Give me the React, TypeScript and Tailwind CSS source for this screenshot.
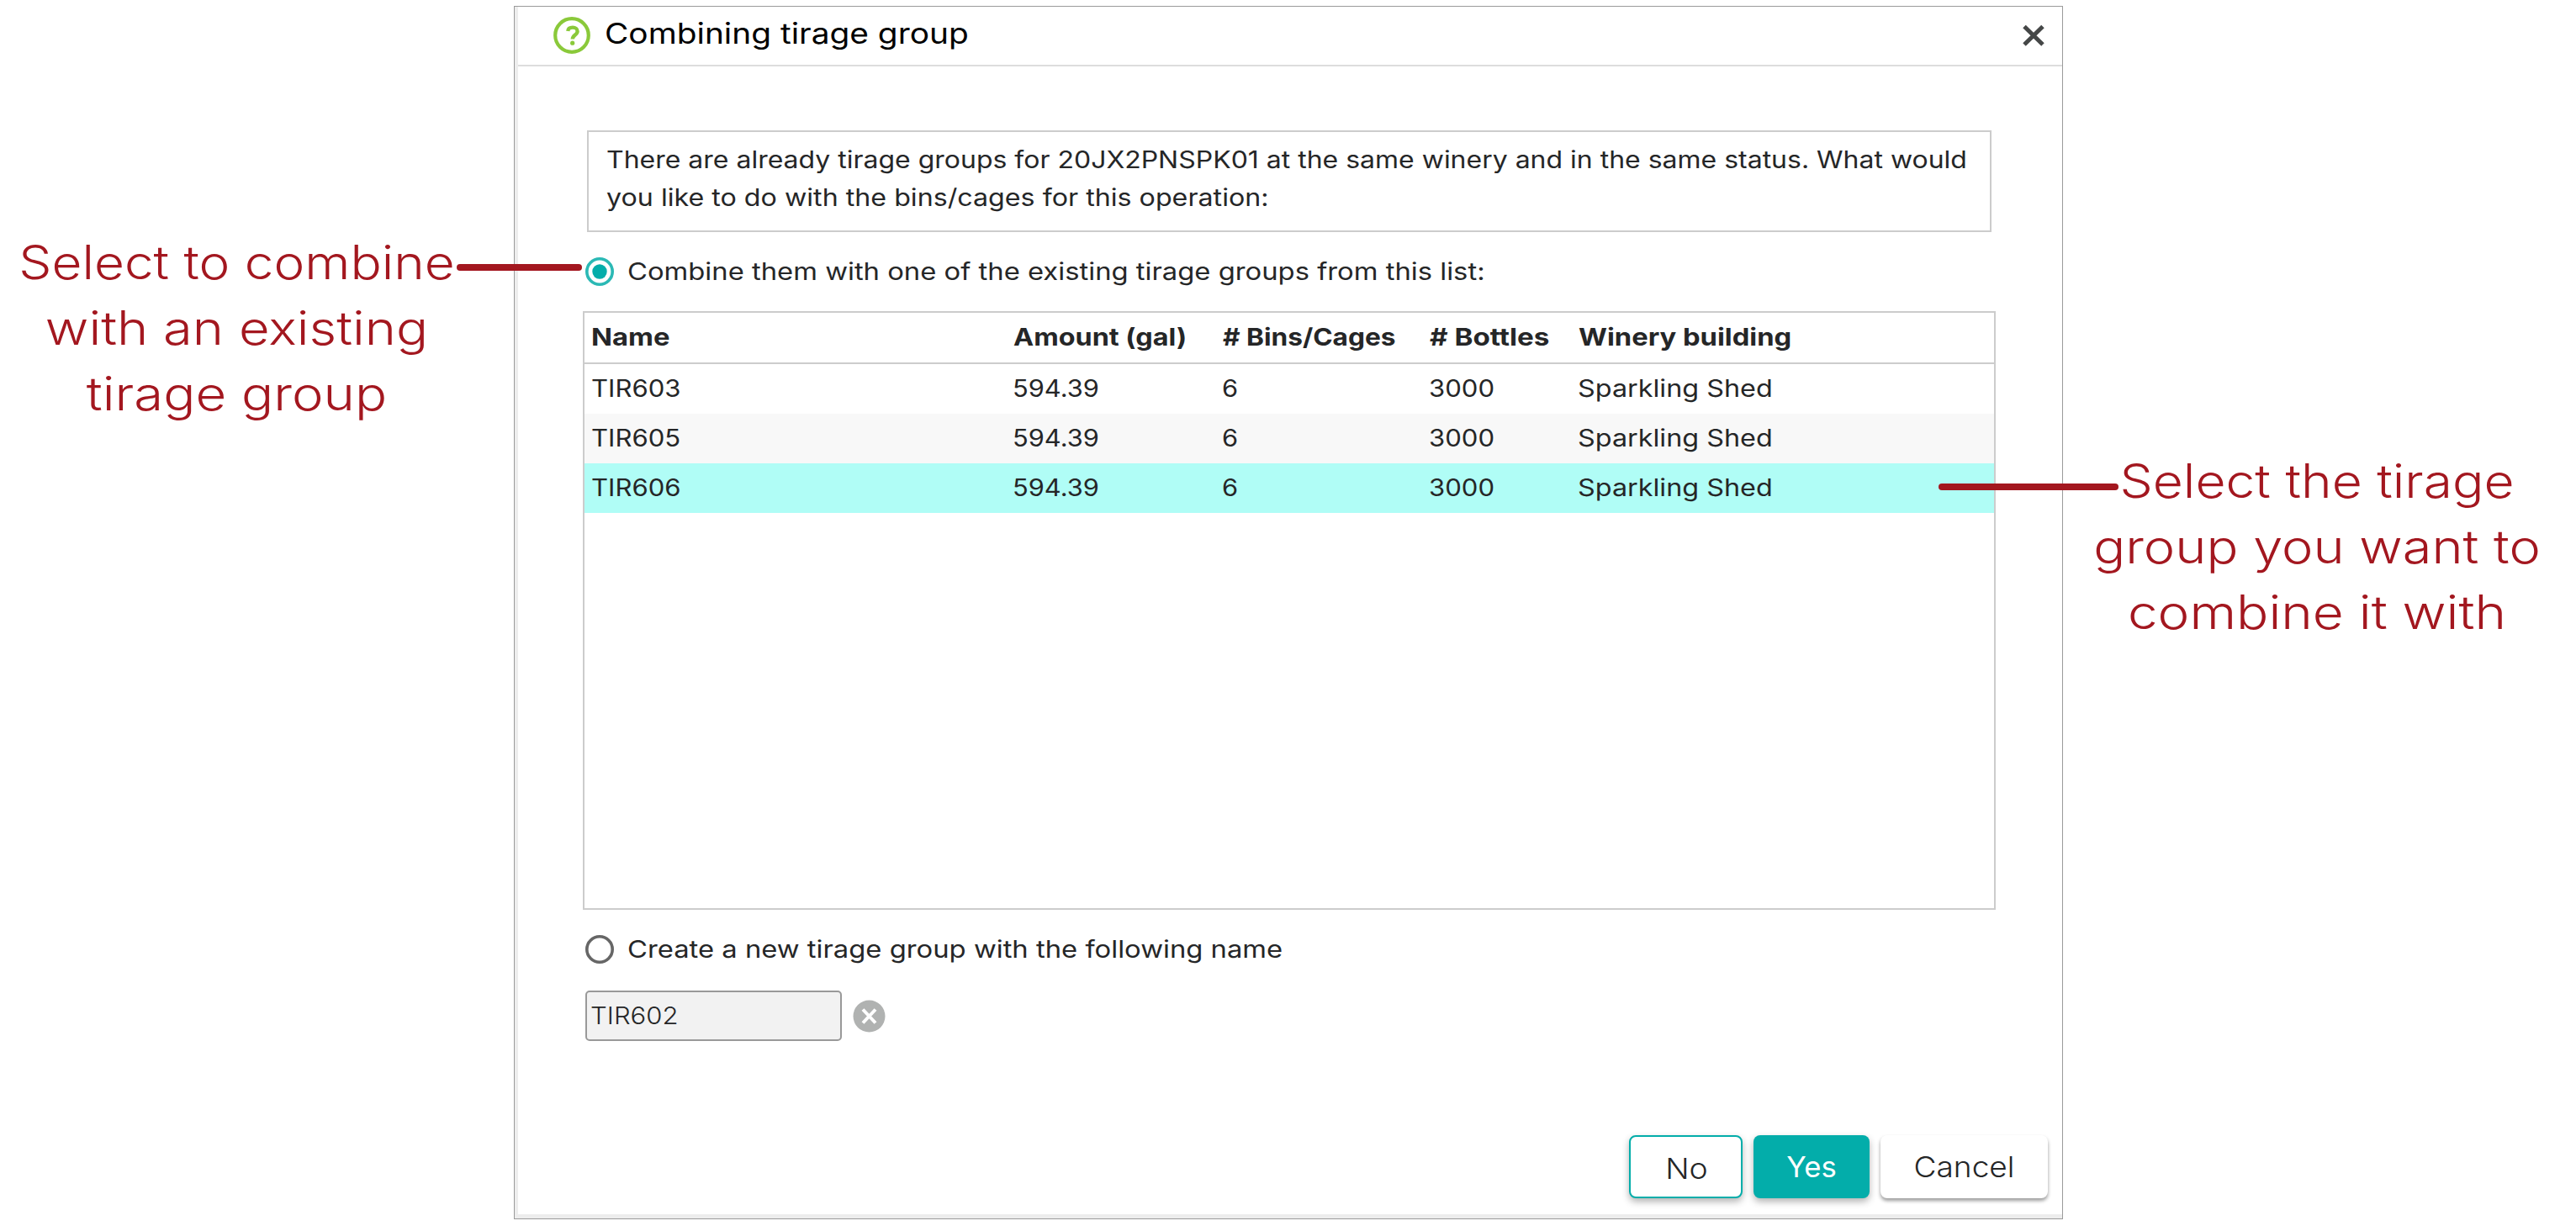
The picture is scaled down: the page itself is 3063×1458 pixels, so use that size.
import { useState } from "react";
import clsx from "clsx";

interface TirageGroup {
  name: string;
  amount: string;
  bins: number;
  bottles: number;
  building: string;
}

const groups: TirageGroup[] = [
  { name: "TIR603", amount: "594.39", bins: 6, bottles: 3000, building: "Sparkling Shed" },
  { name: "TIR605", amount: "594.39", bins: 6, bottles: 3000, building: "Sparkling Shed" },
  { name: "TIR606", amount: "594.39", bins: 6, bottles: 3000, building: "Sparkling Shed" },
];

const columns = [
  { label: "Name", className: "ml-2 scale-x-[1.15]" },
  { label: "Amount (gal)", className: "scale-x-[1.135]" },
  { label: "# Bins/Cages", className: "scale-x-[1.11]" },
  { label: "# Bottles", className: "scale-x-[1.165]" },
  { label: "Winery building", className: "scale-x-[1.148]" },
];

const rowGrid = "grid grid-cols-[510px_249px_246px_177px_1fr] items-center whitespace-nowrap";
const noteText = "text-center text-[55.5px] font-light leading-[78px] text-[#a3171f] whitespace-nowrap";

export default function App() {
  const [mode, setMode] = useState<"combine" | "create">("combine");
  const [selected, setSelected] = useState("TIR606");

  return (
    <div className="flex h-[1458px] w-[3063px] items-start overflow-hidden bg-white font-['Inter',sans-serif] text-[28.5px] text-[#252627]">
      {/* Left note */}
      <div className="relative w-[611px] shrink-0 pt-[273px]">
        <p className={clsx(noteText, "w-[563px]")}>
          <span className="block scale-x-[1.118]">Select to combine</span>
          <span className="block scale-x-[1.14]">with an existing</span>
          <span className="block scale-x-[1.143]">tirage group</span>
        </p>
        <span className="absolute left-[543px] top-[314px] z-10 h-2 w-[149px] rounded-full bg-[#a3171f]" />
      </div>

      {/* Dialog */}
      <div className="mt-[7px] h-[1443px] w-[1842px] shrink-0 border border-[#9b9b9b]">
        <div className="flex h-full flex-col border-b-[5px] border-l-4 border-[#ededed]">
          <header className="flex h-[71px] shrink-0 items-center border-b-2 border-[#dddddd] pb-1 pl-[42px] pr-[21px] text-black">
            <HelpIcon />
            <h1 className="ml-[17px] origin-left scale-x-[1.153] text-[33.7px]">Combining tirage group</h1>
            <button className="ml-auto mt-[3px]">
              <svg className="h-[26px] w-[26px]" viewBox="0 0 26 26" stroke="#454747" strokeWidth="5">
                <path d="M2 2.5 24 24M24 2.5 2 24" />
              </svg>
            </button>
          </header>

          <main className="flex w-[1757px] flex-col pl-[77px]">
            <div className="ml-[5px] mt-[76px] h-[121px] w-[1670px] whitespace-nowrap border-2 border-[#cccccc] pl-[21px] pt-[10px] leading-[45px]">
              <span className="block origin-left scale-x-[1.122]">
                There are already tirage groups for 20JX2PNSPK01 at the same winery and in the same status. What would
              </span>
              <span className="block origin-left scale-x-[1.13]">
                you like to do with the bins/cages for this operation:
              </span>
            </div>

            <label className="flex h-[94px] items-center gap-4 pl-[3px]" onClick={() => setMode("combine")}>
              <Radio checked={mode === "combine"} />
              <span className="origin-left scale-x-[1.15]">
                Combine them with one of the existing tirage groups from this list:
              </span>
            </label>

            <div className="h-[712px] border-2 border-[#cccccc]">
              <div className={clsx(rowGrid, "h-[61px] border-b-2 border-[#cccccc] font-bold")}>
                {columns.map((col) => (
                  <span key={col.label} className={clsx("origin-left", col.className)}>{col.label}</span>
                ))}
              </div>
              {groups.map((group, i) => (
                <div
                  key={group.name}
                  onClick={() => setSelected(group.name)}
                  className={clsx(
                    rowGrid,
                    "h-[59px]",
                    selected === group.name ? "bg-[#b0fdf6]" : i % 2 === 1 && "bg-[#f8f8f8]"
                  )}
                >
                  <span className="ml-2 origin-left scale-x-[1.09]">{group.name}</span>
                  <span className="-ml-px origin-left scale-x-[1.08]">{group.amount}</span>
                  <span className="-ml-px origin-left scale-x-[1.08]">{group.bins}</span>
                  <span className="-ml-px origin-left scale-x-[1.09]">{group.bottles}</span>
                  <span className="-ml-px origin-left scale-x-[1.135]">{group.building}</span>
                </div>
              ))}
            </div>

            <label className="flex h-[94px] items-center gap-4 pl-[3px]" onClick={() => setMode("create")}>
              <Radio checked={mode === "create"} />
              <span className="origin-left scale-x-[1.15]">Create a new tirage group with the following name</span>
            </label>

            <div className="mt-0.5 flex items-center gap-[13px] pl-[3px]">
              <div className="flex h-[60px] w-[305px] items-center rounded-[5px] border-2 border-[#999999] bg-[#f2f2f2] pl-1 font-light">
                <span className="origin-left scale-x-[1.09]">TIR602</span>
              </div>
              <svg className="h-[39px] w-[39px]" viewBox="0 0 39 39">
                <circle cx="19.5" cy="19.5" r="19" fill="#b0b2b1" />
                <path d="M12 11.5 27 27.5M27 11.5 12 27.5" stroke="#fff" strokeWidth="4" />
              </svg>
            </div>
          </main>

          <footer className="mt-auto flex justify-end gap-[13px] pb-[19px] pr-[17px] text-[34px] font-light">
            <button className="h-[75px] w-[135px] rounded-lg border-2 border-[#03adaa] bg-white pl-0.5 pt-1 shadow-[0_4px_8px_rgba(0,0,0,0.3)]">
              <span className="block scale-x-[1.1]">No</span>
            </button>
            <button className="h-[75px] w-[138px] rounded-lg bg-[#03adaa] font-normal text-white shadow-[0_4px_8px_rgba(0,0,0,0.3)]">
              <span className="block scale-x-[1.02]">Yes</span>
            </button>
            <button className="h-[75px] w-[199px] rounded-lg bg-white shadow-[0_3px_4px_rgba(0,0,0,0.4)]">
              <span className="block scale-x-[1.09]">Cancel</span>
            </button>
          </footer>
        </div>
      </div>

      {/* Right note */}
      <div className="relative w-[610px] shrink-0 pt-[533px]">
        <p className={clsx(noteText, "w-[604px]")}>
          <span className="block scale-x-[1.122]">Select the tirage</span>
          <span className="block scale-x-[1.137]">group you want to</span>
          <span className="block scale-x-[1.149]">combine it with</span>
        </p>
        <span className="absolute -left-[148px] top-[575px] h-2 w-[214px] rounded-full bg-[#a3171f]" />
      </div>
    </div>
  );
}

function HelpIcon() {
  return (
    <svg className="mt-[3px] h-11 w-11" viewBox="0 0 44 44" fill="none" stroke="#8ac93a">
      <circle cx="22" cy="22" r="19.8" strokeWidth="4.2" />
      <path
        d="M17.3 17C17.5 14 19.6 12.6 23 12.6c3.200 0 5.600 1.800 5.600 4.600 0 4.400-5.800 4.200-5.800 9.300"
        strokeWidth="4.400"
      />
      <circle cx="22.7" cy="31.2" r="2.6" fill="#8ac93a" stroke="none" />
    </svg>
  );
}

function Radio({ checked }: { checked: boolean }) {
  return (
    <svg className="h-[34px] w-[34px] shrink-0" viewBox="0 0 34 34">
      <circle
        cx="17"
        cy="17"
        r="15.2"
        fill="none"
        stroke={checked ? "#2bb9b5" : "#666666"}
        strokeWidth="3.6"
      />
      {checked && <circle cx="17" cy="17" r="8.7" fill="#03adaa" />}
    </svg>
  );
}
